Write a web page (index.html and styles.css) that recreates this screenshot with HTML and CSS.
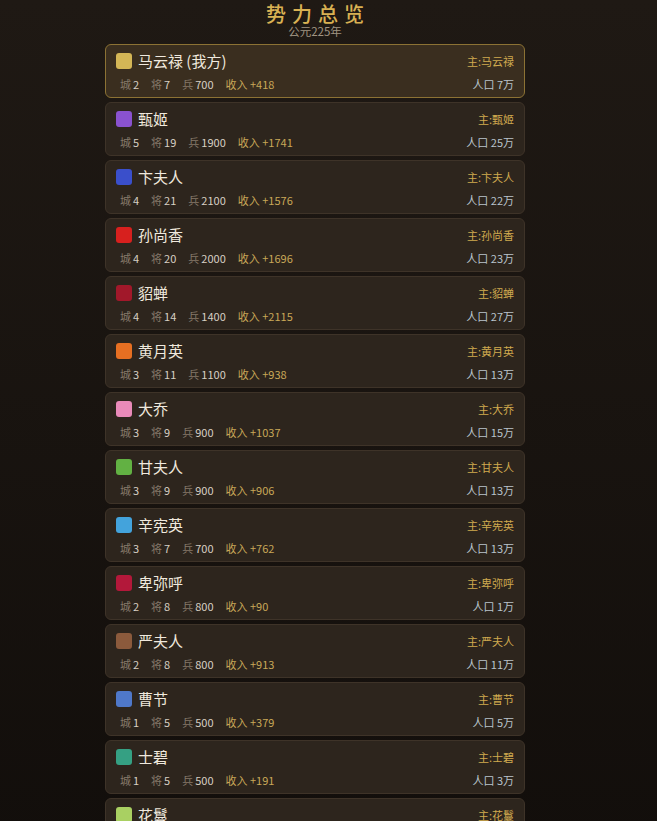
FILE: index.html
```html
<!DOCTYPE html>
<html lang="zh">

<head>
    <meta charset="UTF-8">
    <meta name="viewport" content="width=device-width, initial-scale=1.0">
    <title>势力总览</title>
    <link rel="stylesheet" href="styles.css">
</head>

<body>
    <div class="page">
        <h1 class="title">势力总览</h1>
        <div class="year">公元225年</div>
        <div class="faction-list" id="list"></div>
    </div>

    <script>
        const factions = [
            { name: "马云禄 (我方)", ruler: "马云禄", color: "#d4b656", cities: 2, generals: 7, troops: 700, income: 418, pop: 7, mine: true },
            { name: "甄姬", ruler: "甄姬", color: "#8a52cf", cities: 5, generals: 19, troops: 1900, income: 1741, pop: 25 },
            { name: "卞夫人", ruler: "卞夫人", color: "#3a4fcb", cities: 4, generals: 21, troops: 2100, income: 1576, pop: 22 },
            { name: "孙尚香", ruler: "孙尚香", color: "#d7201e", cities: 4, generals: 20, troops: 2000, income: 1696, pop: 23 },
            { name: "貂蝉", ruler: "貂蝉", color: "#a1182a", cities: 4, generals: 14, troops: 1400, income: 2115, pop: 27 },
            { name: "黄月英", ruler: "黄月英", color: "#e66f22", cities: 3, generals: 11, troops: 1100, income: 938, pop: 13 },
            { name: "大乔", ruler: "大乔", color: "#e98ab9", cities: 3, generals: 9, troops: 900, income: 1037, pop: 15 },
            { name: "甘夫人", ruler: "甘夫人", color: "#62b143", cities: 3, generals: 9, troops: 900, income: 906, pop: 13 },
            { name: "辛宪英", ruler: "辛宪英", color: "#43a3dc", cities: 3, generals: 7, troops: 700, income: 762, pop: 13 },
            { name: "卑弥呼", ruler: "卑弥呼", color: "#b3183a", cities: 2, generals: 8, troops: 800, income: 90, pop: 1 },
            { name: "严夫人", ruler: "严夫人", color: "#8b5a3c", cities: 2, generals: 8, troops: 800, income: 913, pop: 11 },
            { name: "曹节", ruler: "曹节", color: "#4f78c9", cities: 1, generals: 5, troops: 500, income: 379, pop: 5 },
            { name: "士碧", ruler: "士碧", color: "#35a083", cities: 1, generals: 5, troops: 500, income: 191, pop: 3 },
            { name: "花鬘", ruler: "花鬘", color: "#a9d062", cities: 1, generals: 4, troops: 400, income: 120, pop: 2 }
        ];

        const list = document.getElementById("list");

        factions.forEach(f => {
            const card = document.createElement("div");
            card.className = f.mine ? "faction-card mine" : "faction-card";
            card.innerHTML = `
                <div class="card-row">
                    <div class="name-wrap">
                        <span class="swatch" style="background-color: ${f.color}"></span>
                        <span class="faction-name">${f.name}</span>
                    </div>
                    <span class="ruler">主:${f.ruler}</span>
                </div>
                <div class="card-row">
                    <div class="stats">
                        <span><i>城</i>${f.cities}</span>
                        <span><i>将</i>${f.generals}</span>
                        <span><i>兵</i>${f.troops}</span>
                        <span class="income">收入 +${f.income}</span>
                    </div>
                    <span class="pop">人口 ${f.pop}万</span>
                </div>`;
            list.appendChild(card);
        });
    </script>
</body>

</html>
```

FILE: styles.css
```css
body {
    font-family: "Noto Sans CJK SC", "Noto Sans", sans-serif;
    background: linear-gradient(to bottom, #1f1914, #120e0b);
    background-color: #120e0b;
    color: #e8e0d4;
    margin: 0;
    padding: 0;
    min-height: 821px;
}

.page {
    width: 630px;
    display: flex;
    flex-direction: column;
    align-items: center;
}

.title {
    margin: 3px 0 0;
    font-size: 20px;
    line-height: 22px;
    font-weight: 500;
    letter-spacing: 6px;
    padding-left: 6px;
    color: #d9b153;
}

.year {
    font-size: 11.5px;
    line-height: 13px;
    color: #a09482;
    margin-bottom: 6px;
}

.faction-list {
    width: 420px;
    display: flex;
    flex-direction: column;
    gap: 4px;
}

.faction-card {
    background-color: #2d251d;
    border: 1px solid #3e3328;
    border-radius: 6px;
    padding: 6px 10px 5px 10px;
    display: flex;
    flex-direction: column;
    gap: 5px;
}

.faction-card.mine {
    background-color: #3a2e1f;
    border-color: #8c7234;
}

.card-row {
    display: flex;
    justify-content: space-between;
    align-items: center;
}

.card-row:first-child {
    height: 20px;
}

.card-row:last-child {
    height: 16px;
}

.name-wrap {
    display: flex;
    align-items: center;
    gap: 6px;
}

.swatch {
    width: 16px;
    height: 16px;
    border-radius: 3px;
}

.faction-name {
    font-size: 15px;
    line-height: 18px;
    color: #f0e9de;
}

.ruler {
    font-size: 11px;
    color: #d0aa4f;
}

.stats {
    display: flex;
    gap: 12px;
    padding-left: 4px;
    font-size: 11px;
    color: #d8d0c4;
}

.stats i {
    font-style: normal;
    color: #85796a;
    margin-right: 2px;
}

.income {
    color: #c9a858;
}

.pop {
    font-size: 11px;
    color: #b9c4cc;
}
```
